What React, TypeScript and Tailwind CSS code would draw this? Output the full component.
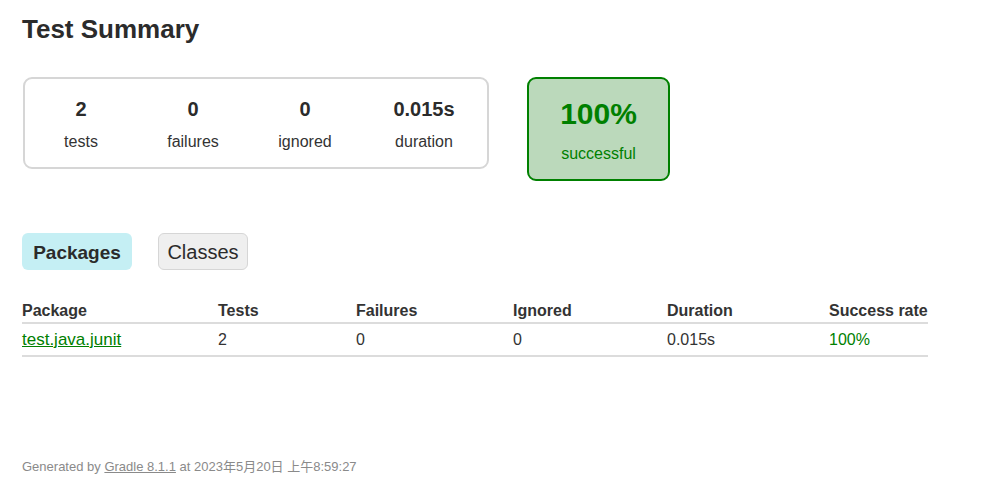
import React from 'react';

const font = { fontFamily: '"Liberation Sans", Arial, "Noto Sans CJK SC", sans-serif' };

const counters = [
  { value: '2', label: 'tests', w: 'w-[112px]' },
  { value: '0', label: 'failures', w: 'w-[112px]' },
  { value: '0', label: 'ignored', w: 'w-[112px]' },
  { value: '0.015s', label: 'duration', w: 'w-[126px]' },
];

const cols = 'grid grid-cols-[196px_138px_157px_154px_162px_99px]';

export default function App() {
  return (
    <div className="w-[987px] h-[491px] bg-white text-[#222] pl-[22px] pt-[13px] overflow-hidden" style={font}>
      {/* ── Title ─────────────────────────────────────────────────── */}
      <h1 className="text-[26px] font-bold leading-[32px] text-[#2b2b2b]">Test Summary</h1>

      {/* ── Summary boxes ─────────────────────────────────────────── */}
      <div className="flex items-start mt-[32px]">
        <div className="ml-[1px] flex border-2 border-[#d6d6d6] rounded-[9px] h-[92px]">
          {counters.map((c) => (
            <div key={c.label} className={`${c.w} flex flex-col items-center pt-[16px]`}>
              <span className="text-[20px] font-bold leading-[28px] text-[#2b2b2b]">{c.value}</span>
              <span className="text-[16px] leading-[20px] mt-[9px] text-[#333]">{c.label}</span>
            </div>
          ))}
        </div>
        <div className="ml-[38px] w-[143px] h-[104px] border-2 border-[#008000] bg-[#bbd9bb] rounded-[9px] flex flex-col items-center pt-[17px] text-[#008000]">
          <span className="text-[30px] font-bold leading-[36px]">100%</span>
          <span className="text-[16px] leading-[20px] mt-[12px]">successful</span>
        </div>
      </div>

      {/* ── Tabs ──────────────────────────────────────────────────── */}
      <div className="flex gap-[26px] mt-[52px]">
        <div className="w-[110px] h-[37px] pt-[3px] bg-[#c5eff4] rounded-[6px] flex items-center justify-center text-[19px] font-bold text-[#2b2b2b]">
          Packages
        </div>
        <div className="w-[90px] h-[37px] bg-[#efefef] border border-[#d6d6d6] rounded-[6px] flex items-center justify-center text-[20px] text-[#2b2b2b]">
          Classes
        </div>
      </div>

      {/* ── Table ─────────────────────────────────────────────────── */}
      <div className="mt-[29px] w-[906px] text-[16px]">
        <div className={`${cols} font-bold text-[#333] h-[25px] items-start border-b-2 border-[#dcdcdc]`}>
          <span>Package</span>
          <span>Tests</span>
          <span>Failures</span>
          <span>Ignored</span>
          <span>Duration</span>
          <span>Success rate</span>
        </div>
        <div className={`${cols} text-[#333] h-[33px] items-center border-b-2 border-[#dcdcdc]`}>
          <span className="text-[#008000] underline text-[17px]">test.java.junit</span>
          <span>2</span>
          <span>0</span>
          <span>0</span>
          <span>0.015s</span>
          <span className="text-[#008000]">100%</span>
        </div>
      </div>

      {/* ── Footer ────────────────────────────────────────────────── */}
      <p className="mt-[100px] text-[13px] text-[#8a8a8a]">
        Generated by <span className="underline">Gradle 8.1.1</span> at 2023年5月20日 上午8:59:27
      </p>
    </div>
  );
}
